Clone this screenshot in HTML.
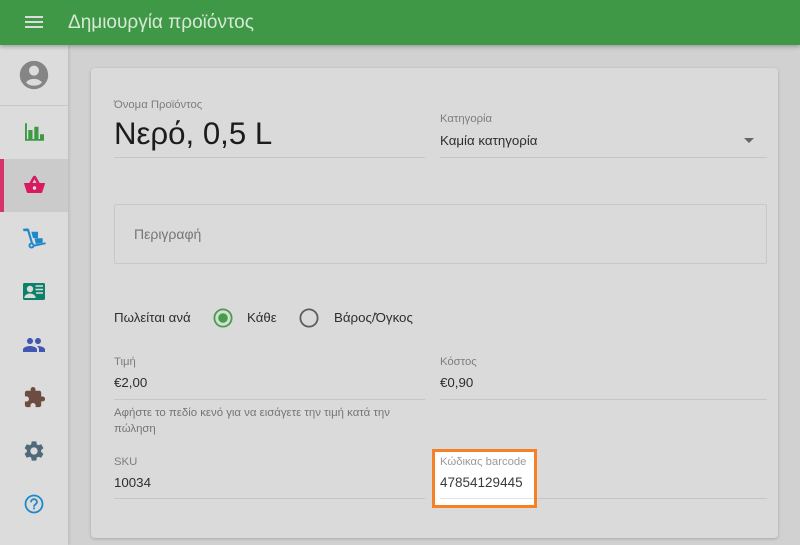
<!DOCTYPE html>
<html lang="el">
<head>
<meta charset="utf-8">
<title>Δημιουργία προϊόντος</title>
<style>
html,body{margin:0;padding:0;width:800px;height:545px;overflow:hidden;background:#d1d1d1;font-family:"Liberation Sans","Noto Sans CJK JP",sans-serif;color:#333}
*{box-sizing:border-box}
#wrap{position:absolute;left:0;top:0;width:800px;height:545px;filter:blur(.25px)}
.abs{position:absolute;white-space:nowrap}
#top{position:absolute;left:0;top:0;width:800px;height:45px;background:#3f9846;box-shadow:0 2px 4px rgba(0,0,0,.25);z-index:5}
#side{position:absolute;left:0;top:45px;width:68px;height:500px;background:#dcdcdc;box-shadow:1px 0 3px rgba(0,0,0,.12)}
#card{position:absolute;left:91px;top:68px;width:687px;height:470px;background:#dadada;border-radius:4px;box-shadow:0 1px 3px rgba(0,0,0,.2)}
.line{position:absolute;height:1px;background:#c6c6c6}
.lab{color:#7d7d7d;font-size:11.3px;line-height:14px}
.val{color:#2e2e2e;font-size:13.3px;line-height:18px}
svg{position:absolute;display:block}
</style>
</head>
<body>
<div id="wrap">
<div id="top">
<svg style="left:22px;top:10px" width="24" height="24" viewBox="0 0 24 24"><path fill="#dcdcdc" d="M3 18h18v-2H3v2zm0-5h18v-2H3v2zm0-7v2h18V6H3z"/></svg>
<div class="abs" style="left:68px;top:11px;font-size:19px;line-height:23px;color:#d8e8d8">Δημιουργία προϊόντος</div>
</div>

<div id="side">
<div style="position:absolute;left:0;top:60px;width:68px;height:1px;background:#c8c8c8"></div>
<div style="position:absolute;left:0;top:114px;width:68px;height:53px;background:#cbcbcb"></div>
<div style="position:absolute;left:0;top:114px;width:4px;height:53px;background:#d6336c"></div>
</div>

<svg style="left:17px;top:58px" width="34" height="34" viewBox="0 0 24 24"><path fill="#858585" fill-rule="evenodd" d="M12 2C6.480 2 2 6.480 2 12s4.480 10 10 10 10-4.480 10-10S17.520 2 12 2zm0 3.400c1.930 0 3.500 1.570 3.500 3.500S13.930 12.400 12 12.400s-3.500-1.570-3.500-3.500S10.070 5.400 12 5.400zm0 14.100c-2.300 0-4.400-.700-5.600-2.300 1-1.500 3.300-2.500 5.600-2.500s4.600 1 5.600 2.500c-1.200 1.600-3.300 2.300-5.600 2.300z"/></svg>

<svg style="left:24px;top:123px" width="21" height="18" viewBox="0 0 21 18"><path fill="#3d9a43" d="M1 .300h1.900V16H20v1.800H1zM4.300 7h4.200v9H4.300zM10.300 3.700h4.200V16h-4.200zM16 11.300h4V16h-4z"/></svg>

<svg style="left:24px;top:175px" width="22" height="19" viewBox="0 0 22 19"><path fill="#d81b60" fill-rule="evenodd" d="M.300 8h5l3.600-6.300c.800-1.300 2.400-1.300 3.200 0L15.700 8h5c.300 0 .400.400.300.700L18.300 17c-.200.800-.900 1-1.500 1H4.200c-.600 0-1.300-.200-1.500-1L.100 8.700C0 8.400.100 8 .300 8zM8.400 8h4.200L10.500 4.300z"/><circle cx="10.500" cy="13" r="1.700" fill="#e8e0e4"/></svg>

<svg style="left:22px;top:228px" width="25" height="21" viewBox="0 0 25 21"><g fill="#1e88c9"><path d="M1 .800 6 .400l1 1L11 15l-1.900.6L5.300 3.100 1.500 3.300z"/><path d="M9.300 3.800h6.700v6.200h-5z"/><path d="M12.500 10.300h8.200v4.300L13.800 16z"/><path d="M10.500 17l12.800-2.800.5 1.900-12.800 2.800z"/><circle cx="9.500" cy="17.500" r="3"/></g><circle cx="9.500" cy="17.500" r="1.100" fill="#dcdcdc"/></svg>

<svg style="left:23px;top:283px" width="22" height="17" viewBox="0 0 22 17"><rect width="22" height="17" rx="1.500" fill="#0d8069"/><circle cx="7" cy="6" r="3.200" fill="#dcdcdc"/><path fill="#dcdcdc" d="M1.300 15c0-3 3.500-4.500 5.700-4.500s5.700 1.500 5.700 4.500z"/><path fill="#dcdcdc" d="M12.500 2.300H20v1.500h-7.500zM12.500 5.800H20v1.500h-7.500zM13 9.300h7v1.500h-7z"/></svg>

<svg style="left:22px;top:333px" width="24" height="24" viewBox="0 0 24 24"><path fill="#4257b2" d="M16 11c1.660 0 2.990-1.340 2.990-3S17.660 5 16 5c-1.660 0-3 1.340-3 3s1.340 3 3 3zm-8 0c1.660 0 2.990-1.340 2.990-3S9.660 5 8 5C6.340 5 5 6.340 5 8s1.340 3 3 3zm0 2c-2.330 0-7 1.170-7 3.500V19h14v-2.500c0-2.330-4.670-3.500-7-3.500zm8 0c-.290 0-.620.020-.970.050 1.160.840 1.970 1.970 1.970 3.450V19h6v-2.500c0-2.330-4.670-3.500-7-3.500z"/></svg>

<svg style="left:23px;top:386px" width="23" height="23" viewBox="0 0 24 24"><path fill="#6d4c41" d="M20.500 11H19V7c0-1.100-.900-2-2-2h-4V3.500C13 2.120 11.880 1 10.500 1S8 2.120 8 3.500V5H4c-1.100 0-1.990.900-1.990 2v3.800H3.500c1.490 0 2.700 1.210 2.700 2.700s-1.210 2.700-2.700 2.700H2V20c0 1.100.900 2 2 2h3.800v-1.500c0-1.490 1.210-2.700 2.700-2.700 1.490 0 2.700 1.210 2.700 2.700V22H17c1.100 0 2-.900 2-2v-4h1.500c1.380 0 2.500-1.120 2.500-2.500S21.880 11 20.500 11z"/></svg>

<svg style="left:22px;top:439px" width="24" height="24" viewBox="0 0 24 24"><path fill="#4f6a78" d="M19.140 12.940c.040-.300.060-.610.060-.940 0-.320-.020-.640-.070-.940l2.030-1.580c.180-.140.230-.410.120-.610l-1.920-3.320c-.120-.220-.370-.290-.590-.220l-2.390.960c-.500-.380-1.030-.700-1.620-.940l-.360-2.540c-.040-.240-.240-.410-.480-.410h-3.840c-.240 0-.430.170-.470.410l-.360 2.540c-.590.240-1.130.570-1.620.940l-2.390-.960c-.220-.080-.470 0-.590.220L2.740 8.870c-.120.210-.080.470.120.610l2.030 1.580c-.050.300-.090.630-.090.940s.020.640.070.940l-2.030 1.580c-.180.140-.230.410-.120.610l1.920 3.320c.120.220.370.290.590.220l2.390-.960c.500.380 1.030.700 1.620.940l.360 2.540c.050.240.240.410.480.410h3.840c.240 0 .440-.170.470-.410l.360-2.540c.590-.240 1.130-.560 1.620-.940l2.390.960c.220.080.470 0 .590-.220l1.920-3.320c.120-.220.070-.470-.120-.610l-2.010-1.580zM12 15.600c-1.980 0-3.600-1.620-3.600-3.600s1.620-3.600 3.600-3.600 3.600 1.620 3.600 3.600-1.620 3.600-3.600 3.600z"/></svg>

<svg style="left:23px;top:493px" width="22" height="22" viewBox="0 0 22 22"><circle cx="11" cy="11" r="8.500" fill="none" stroke="#1e88c9" stroke-width="1.800"/><path fill="none" stroke="#1e88c9" stroke-width="1.800" d="M8 9.200c0-1.800 1.300-3 3-3s3 1.200 3 2.800c0 2.300-3 2.300-3 4.700"/><path fill="#1e88c9" d="M10.100 14.500h1.800v1.800h-1.800z"/></svg>

<div id="card"></div>

<div class="abs lab" style="left:114px;top:98px">Όνομα Προϊόντος</div>
<div class="abs" style="left:114px;top:115px;font-size:31.200px;line-height:38px;color:#1c1c1c">Νερό, 0,5 L</div>
<div class="line" style="left:114px;top:157px;width:311px"></div>

<div class="abs lab" style="left:440px;top:112px">Κατηγορία</div>
<div class="abs val" style="left:440px;top:132px">Καμία κατηγορία</div>
<svg style="left:744px;top:138px" width="10" height="5" viewBox="0 0 10 5"><path fill="#666" d="M0 0h10L5 5z"/></svg>
<div class="line" style="left:440px;top:157px;width:327px"></div>

<div style="position:absolute;left:114px;top:204px;width:653px;height:60px;border:1px solid #c8c8c8;border-radius:2px"></div>
<div class="abs" style="left:134px;top:225px;font-size:14px;line-height:18px;color:#757575">Περιγραφή</div>

<div class="abs val" style="left:114px;top:309px">Πωλείται ανά</div>
<svg style="left:213px;top:308px" width="20" height="20" viewBox="0 0 20 20"><circle cx="10" cy="10" r="8.600" fill="none" stroke="#43a047" stroke-width="1.800"/><circle cx="10" cy="10" r="4.800" fill="#43a047"/></svg>
<div class="abs val" style="left:247px;top:309px">Κάθε</div>
<svg style="left:299px;top:308px" width="20" height="20" viewBox="0 0 20 20"><circle cx="10" cy="10" r="8.600" fill="none" stroke="#5c5c5c" stroke-width="1.800"/></svg>
<div class="abs val" style="left:334px;top:309px">Βάρος/Όγκος</div>

<div class="abs lab" style="left:114px;top:355px">Τιμή</div>
<div class="abs val" style="left:114px;top:374px">€2,00</div>
<div class="line" style="left:114px;top:399px;width:311px"></div>
<div class="abs" style="left:114px;top:405px;font-size:11.400px;line-height:16px;color:#757575">Αφήστε το πεδίο κενό για να εισάγετε την τιμή κατά την<br>πώληση</div>

<div class="abs lab" style="left:440px;top:355px">Κόστος</div>
<div class="abs val" style="left:440px;top:374px">€0,90</div>
<div class="line" style="left:440px;top:399px;width:327px"></div>

<div class="abs lab" style="left:114px;top:455px">SKU</div>
<div class="abs val" style="left:114px;top:474px">10034</div>
<div class="line" style="left:114px;top:498px;width:311px"></div>

<div class="line" style="left:440px;top:498px;width:327px"></div>
</div>
<div style="position:absolute;left:432px;top:449px;width:105px;height:59px;background:#fff;border:3px solid #f58026"></div>
<div class="abs lab" style="left:440px;top:455px;color:#9a9a9a">Κώδικας barcode</div>
<div class="abs val" style="left:440px;top:474px;color:#3a3a3a;font-size:13.500px">47854129445</div>
<div class="line" style="left:440px;top:498px;width:94px;background:#e4e4e4"></div>
</body>
</html>
